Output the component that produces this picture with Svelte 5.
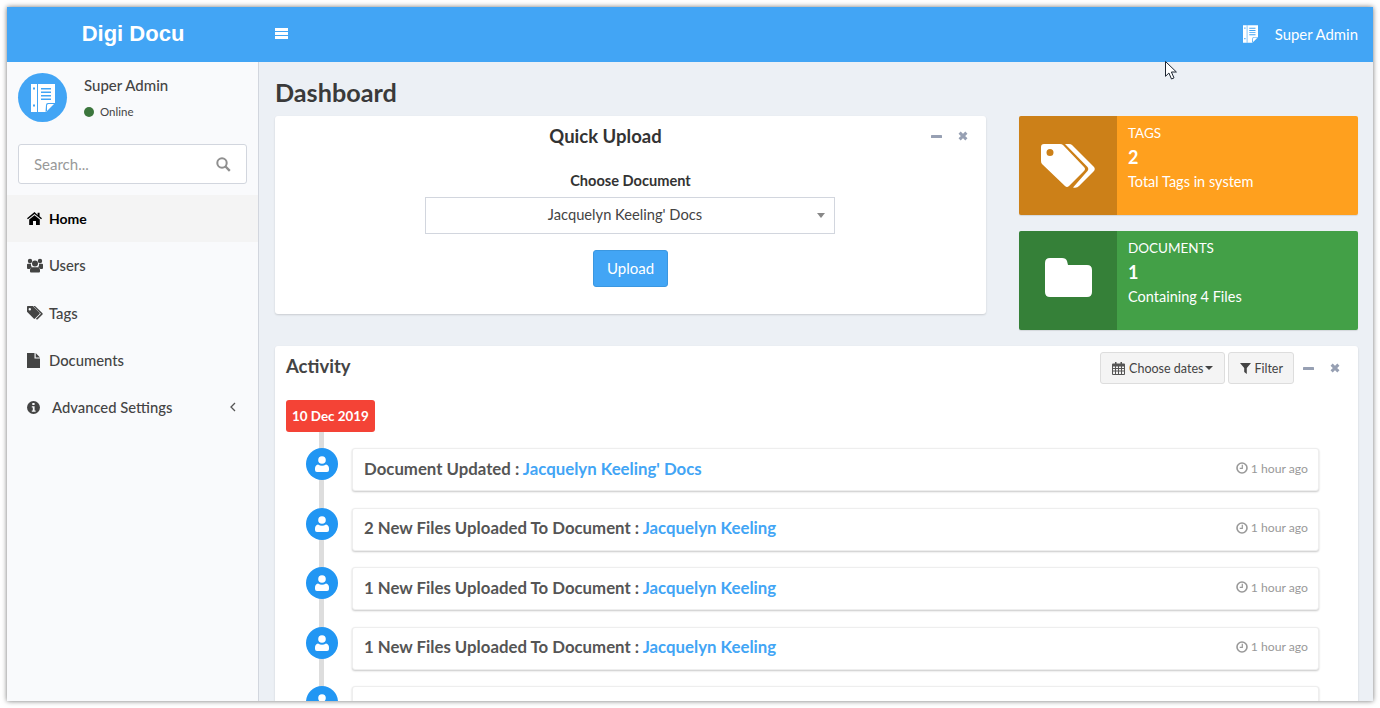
<script>
  const nav = [
    { label: "Home", icon: "home", active: true },
    { label: "Users", icon: "users" },
    { label: "Tags", icon: "tags" },
    { label: "Documents", icon: "file" }
  ];

  const activity = [
    { text: "Document Updated :", link: "Jacquelyn Keeling' Docs" },
    { text: "2 New Files Uploaded To Document :", link: "Jacquelyn Keeling" },
    { text: "1 New Files Uploaded To Document :", link: "Jacquelyn Keeling" },
    { text: "1 New Files Uploaded To Document :", link: "Jacquelyn Keeling" },
    { text: "", link: "" }
  ];
</script>

{#snippet logo(w, h)}
  <svg width={w} height={h} viewBox="0 0 24 28">
    <path fill="#fff" d="M0 0h24v19l-9 9H0z" />
    <path fill="#42a5f5" d="M6 0h1v28H6zM2 3.500h2v2H2zM2 20.500h2v2H2z" />
    <path fill="#42a5f5" d="M14.500 28l.5-7q0-2 2-2h7v1h-6.500q-1.500 0-1.500 1.500V27z" />
    <path fill="#42a5f5" d="M10 4h10v1.500H10zM10 7.500h10V9H10zM10 11h10v1.500H10zM10 14.500h10V16H10z" />
  </svg>
{/snippet}

{#snippet navIcon(name)}
  {#if name === "home"}
    <svg width="15" height="13" viewBox="0 0 15 13"><path fill="currentColor" d="M7.500 0 0 6.300l.9 1L7.500 1.900l6.600 5.400.9-1-2.400-2V.7h-2v2.200zM2.200 7.600V13h3.800V9h3v4h3.800V7.600L7.500 3.200z" /></svg>
  {:else if name === "users"}
    <svg width="16" height="15" viewBox="0 0 16 15"><path fill="currentColor" d="M8 2.500a3 3 0 1 1 0 6 3 3 0 0 1 0-6zM3 .8a2.200 2.200 0 1 1 0 4.400A2.200 2.200 0 0 1 3 .8zm10 0a2.200 2.200 0 1 1 0 4.400A2.200 2.200 0 0 1 13 .8zM0 6.600q0-.8 1-.8h3a4 4 0 0 0 .8 3.500Q3 10 2.700 11H1q-1 0-1-1zm16 0q0-.8-1-.8h-3a4 4 0 0 1-.8 3.500q1.800.7 2.100 1.700h1.700q1 0 1-1zM5.500 9.300h5q2.500.2 2.500 3v1.200q0 1-1 1H4q-1 0-1-1v-1.200q0-2.800 2.500-3z" /></svg>
  {:else if name === "tags"}
    <svg width="16" height="14" viewBox="0 0 16 14"><path fill="currentColor" d="M.8 0h5l6.700 6.700q.6.700 0 1.300L8 12.600q-.7.600-1.300 0L0 5.800V.8Q0 0 .8 0zm2 2a1.200 1.200 0 1 0 0 2.400A1.200 1.200 0 0 0 2.800 2zM8 0l7.500 7.200q.5.700 0 1.300l-4.800 4.700q-.7.500-1.300 0l-.5-.4 5-5-7.500-7.800z" /></svg>
  {:else if name === "file"}
    <svg width="13" height="15" viewBox="0 0 13 15"><path fill="currentColor" d="M0 0h7.500v5.500H13V15H0zM8.700 0 13 4.400H8.700z" /></svg>
  {/if}
{/snippet}

{#snippet boxTools()}
  <span class="tools">
    <svg width="11" height="3" viewBox="0 0 11 3"><rect width="11" height="3" rx=".6" fill="#97a0b3" /></svg>
    <svg width="10" height="10" viewBox="0 0 10 10"><path d="M1.600 1.600l6.800 6.800M8.400 1.600 1.600 8.400" stroke="#97a0b3" stroke-width="3" /></svg>
  </span>
{/snippet}

<div class="frame">
  <header class="topbar">
    <div class="brand">Digi Docu</div>
    <div class="toggle"><i></i><i></i><i></i></div>
    <div class="account">
      {@render logo(15, 18)}
      <span>Super Admin</span>
    </div>
  </header>

  <div class="layout">
    <aside class="sidebar">
      <div class="user-panel">
        <div class="avatar">{@render logo(24, 28)}</div>
        <div class="user-info">
          <div class="user-name">Super Admin</div>
          <div class="user-status"><i class="dot"></i>Online</div>
        </div>
      </div>

      <div class="search">
        <span>Search...</span>
        <svg width="15" height="15" viewBox="0 0 15 15" fill="none" stroke="#8f8f8f" stroke-width="2"><circle cx="6" cy="6" r="4.700" /><path d="M9.500 9.500l4.300 4.300" stroke-width="2.400" /></svg>
      </div>

      <nav class="menu">
        {#each nav as item}
          <div class="menu-item" class:active={item.active}>
            <span class="menu-icon">{@render navIcon(item.icon)}</span>
            {item.label}
          </div>
        {/each}
        <div class="menu-item">
          <span class="menu-icon wide">
            <svg width="13" height="13" viewBox="0 0 13 13"><circle cx="6.500" cy="6.500" r="6.500" fill="currentColor" /><path fill="#f9fafc" d="M5.300 2h2.300v2H5.300zM4.800 5.200h2.800v4.200h1v1.300H4.800V9.400h1V6.500h-1z" /></svg>
          </span>
          Advanced Settings
          <svg class="chevron" width="6" height="10" viewBox="0 0 6 10" fill="none" stroke="#555" stroke-width="1.300"><path d="M5 1 1 5l4 4" /></svg>
        </div>
      </nav>
    </aside>

    <main class="content">
      <h1>Dashboard</h1>

      <div class="top-row">
        <section class="box upload">
          <div class="upload-head">
            <h3>Quick Upload</h3>
            {@render boxTools()}
          </div>
          <label for="doc">Choose Document</label>
          <div class="select" id="doc">
            <span>Jacquelyn Keeling' Docs</span>
            <i class="caret"></i>
          </div>
          <button class="upload-btn">Upload</button>
        </section>

        <div class="stats">
          <div class="stat orange">
            <div class="stat-icon">
              <svg width="54" height="44" viewBox="0 0 54 44"><path fill="#fff" d="M3 0h16q2 0 3 1l21 22q2 2 0 4L28 42q-2 2-4 0L1 20q-1-1-1-3V3q0-3 3-3zm6 5a3.500 3.500 0 1 0 0 7 3.500 3.500 0 0 0 0-7zM24 0h4q2 0 3 1l22 22q1.500 2 0 4L38 42q-2 2.500-6 1.500L46.500 27q1.500-2 0-4z" /></svg>
            </div>
            <div class="stat-body">
              <div class="stat-title">TAGS</div>
              <div class="stat-num">2</div>
              <div class="stat-text">Total Tags in system</div>
            </div>
          </div>
          <div class="stat green">
            <div class="stat-icon folder">
              <svg width="47" height="39" viewBox="0 0 47 39"><path fill="#fff" d="M5 0h12q4 0 5 3l1 4h19q5 0 5 5v22q0 5-5 5H5q-5 0-5-5V5q0-5 5-5z" /></svg>
            </div>
            <div class="stat-body">
              <div class="stat-title">DOCUMENTS</div>
              <div class="stat-num">1</div>
              <div class="stat-text">Containing 4 Files</div>
            </div>
          </div>
        </div>
      </div>

      <section class="box activity">
        <div class="activity-head">
          <h3>Activity</h3>
          <div class="activity-actions">
            <button class="tool-btn">
              <svg width="13" height="13" viewBox="0 0 13 13"><path fill="#555" fill-rule="evenodd" d="M1 1.500h2V0h1.500v1.500h4V0H10v1.500h2q1 0 1 1V12q0 1-1 1H1q-1 0-1-1V2.500q0-1 1-1zM1 4.500V6h2V4.500zm3 0V6h2V4.500zm3 0V6h2V4.500zm3 0V6h2V4.500zM1 7v1.500h2V7zm3 0v1.500h2V7zm3 0v1.500h2V7zm3 0v1.500h2V7zM1 9.500V12h2V9.500zm3 0V12h2V9.500zm3 0V12h2V9.500zm3 0V12h2V9.500z" /></svg>
              Choose dates
              <i class="caret small"></i>
            </button>
            <button class="tool-btn filter">
              <svg width="11" height="11" viewBox="0 0 11 11"><path fill="#444" d="M0 0h11L6.800 5v6L4.200 9V5z" /></svg>
              Filter
            </button>
            {@render boxTools()}
          </div>
        </div>

        <div class="timeline">
          <span class="date-label">10 Dec 2019</span>
          {#each activity as row}
            <div class="entry">
              <div class="bubble">
                <svg width="14" height="16" viewBox="0 0 14 16"><circle cx="7" cy="4" r="3.800" fill="#fff" /><path fill="#fff" d="M3 8.500q4 2.500 8 0 3 .8 3 4V14q0 2-2 2H2q-2 0-2-2v-1.500q0-3.200 3-4z" /></svg>
              </div>
              <div class="entry-card">
                {#if row.text}
                  <span class="entry-text">{row.text} <span class="entry-link">{row.link}</span></span>
                  <span class="entry-time">
                    <svg width="12" height="12" viewBox="0 0 12 12" fill="none" stroke="#999" stroke-width="1.600"><circle cx="6" cy="6" r="5" /><path d="M6.300 2.800v3.500H3.700" stroke-width="1.200" /></svg>
                    1 hour ago
                  </span>
                {/if}
              </div>
            </div>
          {/each}
        </div>
      </section>
    </main>
  </div>

  <svg class="cursor" width="13" height="19" viewBox="0 0 13 19"><path fill="#fff" stroke="#1c2430" d="M.5.500v14.800l3.400-3.300 2.600 6 2.500-1.100-2.600-5.900h5z" /></svg>
</div>

<style>
  :global(body) {
    margin: 0;
    background: #fff;
    font-family: "Lato", "Open Sans", sans-serif;
    color: #444;
    overflow: hidden;
  }

  .frame {
    position: relative;
    margin: 7px;
    width: 1366px;
    height: 694px;
    overflow: hidden;
    background: #ecf0f5;
    box-shadow: 0 0 5px rgba(0, 0, 0, 0.55);
  }

  .topbar {
    display: flex;
    align-items: center;
    height: 55px;
    background: #42a5f5;
    color: #fff;
  }

  .brand {
    width: 252px;
    margin-bottom: 2px;
    text-align: center;
    font-family: "Liberation Sans", sans-serif;
    font-weight: 700;
    font-size: 22px;
  }

  .toggle {
    display: flex;
    flex-direction: column;
    gap: 1px;
    margin-left: 16px;
    margin-bottom: 3px;
  }

  .toggle i {
    display: block;
    width: 13px;
    height: 3px;
    background: #fff;
  }

  .account {
    display: flex;
    align-items: center;
    gap: 17px;
    margin-left: auto;
    margin-bottom: 2px;
    padding-right: 15px;
    font-size: 14.900px;
  }

  .layout {
    display: flex;
    height: 639px;
  }

  .sidebar {
    flex: none;
    width: 251px;
    background: #f9fafc;
    border-right: 1px solid #d2d6de;
  }

  .user-panel {
    display: flex;
    padding: 11px 11px 0;
    height: 79px;
    box-sizing: border-box;
  }

  .avatar {
    display: flex;
    align-items: center;
    justify-content: center;
    width: 49px;
    height: 49px;
    border-radius: 50%;
    background: #42a5f5;
  }

  .user-info {
    margin-left: 17px;
  }

  .user-name {
    margin-top: 3px;
    font-size: 15px;
    font-weight: 500;
    color: #444;
  }

  .user-status {
    display: flex;
    align-items: center;
    margin-top: 11px;
    font-size: 11.500px;
    color: #444;
  }

  .dot {
    width: 10px;
    height: 10px;
    margin-right: 6px;
    border-radius: 50%;
    background: #3c763d;
  }

  .search {
    display: flex;
    align-items: center;
    justify-content: space-between;
    box-sizing: border-box;
    height: 40px;
    margin: 3px 11px 11px;
    padding: 0 15px;
    background: #fff;
    border: 1px solid #d2d6de;
    border-radius: 3px;
    font-size: 15px;
    color: #999;
  }

  .menu-item {
    display: flex;
    align-items: center;
    height: 47.300px;
    padding-left: 20px;
    padding-bottom: 1px;
    box-sizing: border-box;
    font-size: 14.800px;
    font-weight: 500;
    color: #444;
  }

  .menu-item.active {
    background: #f4f4f4;
    color: #000;
    font-size: 14px;
    font-weight: 700;
  }

  .menu-icon {
    display: flex;
    width: 22px;
  }

  .menu-icon.wide {
    width: 25px;
  }

  .chevron {
    margin-left: auto;
    margin-right: 22px;
  }

  .content {
    flex: 1;
    padding: 0 15px 0 16px;
    overflow: hidden;
  }

  h1 {
    margin: 15px 0 9px;
    font-size: 25.200px;
    line-height: 30px;
    font-weight: 700;
    color: #3a3a3a;
  }

  h3 {
    margin: 0;
    font-size: 18.500px;
    font-weight: 700;
    color: #444;
  }

  .top-row {
    display: flex;
    gap: 33px;
    margin-bottom: 16px;
  }

  .box {
    background: #fff;
    border-radius: 3px;
    box-shadow: 0 1px 2px rgba(0, 0, 0, 0.15);
  }

  .upload {
    display: flex;
    flex-direction: column;
    align-items: center;
    box-sizing: border-box;
    width: 711px;
    height: 198px;
  }

  .upload-head {
    position: relative;
    align-self: stretch;
    height: 42px;
    text-align: center;
  }

  .upload-head h3 {
    line-height: 41px;
    color: #333;
    padding-right: 50px;
  }

  .upload-head .tools {
    position: absolute;
    top: 0;
    right: 18px;
  }

  .tools {
    display: inline-flex;
    align-items: center;
    gap: 16px;
    height: 40px;
  }

  label {
    margin-top: 14px;
    font-size: 14.600px;
    font-weight: 700;
    color: #333;
    line-height: 18px;
  }

  .select {
    position: relative;
    box-sizing: border-box;
    width: 410px;
    height: 37px;
    margin-top: 7px;
    margin-right: 1px;
    padding-right: 10px;
    border: 1px solid #d2d6de;
    font-size: 14.700px;
    line-height: 33px;
    text-align: center;
    color: #444;
  }

  .caret {
    position: absolute;
    right: 9px;
    top: 15px;
    border-left: 4.500px solid transparent;
    border-right: 4.500px solid transparent;
    border-top: 5px solid #888;
  }

  .caret.small {
    position: static;
    margin-left: -2px;
    border-left-width: 4px;
    border-right-width: 4px;
    border-top: 4px solid #444;
  }

  .upload-btn {
    box-sizing: border-box;
    width: 75px;
    height: 37px;
    margin-top: 16px;
    padding-bottom: 2px;
    border: 1px solid #3b97e0;
    border-radius: 3px;
    background: #42a5f5;
    color: #fff;
    font: inherit;
    font-size: 15px;
  }

  .stats {
    display: flex;
    flex-direction: column;
    gap: 16px;
    width: 339px;
  }

  .stat {
    display: flex;
    height: 99px;
    border-radius: 2px;
    overflow: hidden;
    color: #fff;
    box-shadow: 0 1px 1px rgba(0, 0, 0, 0.1);
  }

  .orange {
    background: #ffa01e;
  }

  .green {
    background: #43a047;
  }

  .stat-icon {
    display: flex;
    align-items: center;
    justify-content: center;
    width: 98px;
    background: rgba(0, 0, 0, 0.2);
  }

  .stat-icon.folder svg {
    margin-bottom: 6px;
  }

  .stat-body {
    padding: 8px 11px;
  }

  .stat-title {
    font-size: 13.500px;
    line-height: 18px;
  }

  .stat-num {
    margin-top: 3px;
    font-size: 18px;
    font-weight: 700;
    line-height: 24px;
  }

  .stat-text {
    margin-top: 4px;
    font-size: 14.500px;
    line-height: 18px;
  }

  .activity {
    height: 400px;
    padding: 6px 11px 0;
    overflow: hidden;
  }

  .activity-head {
    display: flex;
    align-items: center;
    justify-content: space-between;
    height: 32px;
  }

  .activity-head h3 {
    margin-top: -4px;
    color: #444;
  }

  .activity-actions {
    display: flex;
    align-items: center;
    gap: 3px;
    padding-right: 7px;
  }

  .activity-actions .tools {
    margin-left: 6px;
  }

  .tool-btn {
    display: flex;
    align-items: center;
    gap: 4px;
    box-sizing: border-box;
    height: 32px;
    padding: 0 11px;
    background: #f4f4f4;
    border: 1px solid #ddd;
    border-radius: 3px;
    font: inherit;
    font-size: 12.500px;
    color: #444;
  }

  .tool-btn.filter {
    padding: 0 10px 0 11px;
    gap: 3px;
  }

  .timeline {
    position: relative;
    margin-top: 16px;
  }

  .timeline::before {
    content: "";
    position: absolute;
    left: 33px;
    top: 0;
    bottom: 0;
    width: 5px;
    background: #ddd;
  }

  .date-label {
    position: relative;
    display: inline-block;
    box-sizing: border-box;
    height: 32px;
    margin-bottom: 16px;
    padding: 0 6px;
    background: #f44336;
    border-radius: 3px;
    color: #fff;
    font-size: 13.400px;
    font-weight: 700;
    line-height: 33px;
  }

  .entry {
    position: relative;
    height: 43px;
    margin-bottom: 16.500px;
    margin-left: 66px;
    margin-right: 28px;
  }

  .bubble {
    position: absolute;
    left: -46px;
    top: 0;
    display: flex;
    align-items: center;
    justify-content: center;
    width: 32px;
    height: 32px;
    border-radius: 50%;
    background: #2196f3;
  }

  .entry-card {
    display: flex;
    align-items: center;
    justify-content: space-between;
    box-sizing: border-box;
    height: 43px;
    padding: 0 10px 3px 11px;
    background: #fff;
    border: 1px solid #eee;
    border-radius: 3px;
    box-shadow: 0 1px 2px rgba(0, 0, 0, 0.22);
  }

  .entry-text {
    font-size: 16.800px;
    font-weight: 700;
    color: #555;
  }

  .entry-link {
    color: #42a5f5;
  }

  .entry-time {
    display: flex;
    align-items: center;
    gap: 3px;
    font-size: 12.200px;
    color: #999;
  }

  .cursor {
    position: absolute;
    left: 1158px;
    top: 54px;
  }
</style>
